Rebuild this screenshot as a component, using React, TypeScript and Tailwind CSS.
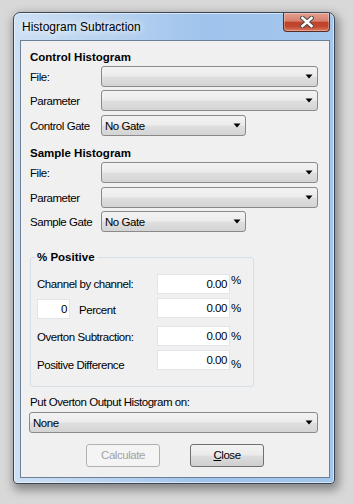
import React from "react";

function Arrow() {
  return (
    <svg width="8" height="5" viewBox="0 0 8 5" className="shrink-0">
      <path d="M0.5 0.5H7.5L4 4.5Z" fill="#000" />
    </svg>
  );
}

function Combo({ w, text }: { w: string; text?: string }) {
  return (
    <div
      className={`${w} h-[21px] flex items-center justify-between rounded-[3px] border border-[#8a8a8a] bg-[linear-gradient(#f3f3f3_0%,#ececec_48%,#dfdfdf_52%,#d4d4d4_100%)] pl-[3px] pr-[4px]`}
    >
      <span className="leading-[14px]">{text}</span>
      <Arrow />
    </div>
  );
}

function TextBox({ w, value }: { w: string; value: string }) {
  return (
    <div
      className={`${w} h-[20px] shrink-0 flex items-center justify-end border border-[#e3e4ea] bg-white pr-[2px] leading-[14px]`}
    >
      {value}
    </div>
  );
}

function CloseGlyph() {
  return (
    <svg width="14" height="12" viewBox="0 0 14 12">
      <path d="M2.5 2L11.5 10M11.5 2L2.5 10" stroke="#4a4a4a" strokeWidth="4.6" strokeLinecap="square" />
      <path d="M2.5 2L11.5 10M11.5 2L2.5 10" stroke="#ffffff" strokeWidth="2.6" strokeLinecap="square" />
    </svg>
  );
}

export default function App() {
  return (
    <div className="w-[353px] h-[504px] overflow-hidden bg-[#d8d8d8] pt-[12px] pl-[13px] font-['Liberation_Sans',Arial,sans-serif] text-[11.5px] tracking-[-0.45px] text-black">
      <div className="relative w-[322px] h-[472px] flex flex-col rounded-t-[7px] rounded-b-[4px] border border-[#3b4756] bg-[linear-gradient(90deg,#cde0f4_0%,#b4d0ef_35%,#9fc3ec_60%,#a3c6ec_100%)] shadow-[inset_0_0_0_1px_rgba(255,255,255,0.55),2px_4px_10px_2px_rgba(0,0,0,0.38)]">
        {/* Title bar */}
        <div className="h-[27px] shrink-0 flex items-center pl-[8px]">
          <span className="text-[12px] tracking-normal leading-[16px] text-black [text-shadow:0_0_6px_#ffffff,0_0_10px_#ffffff]">
            Histogram Subtraction
          </span>
        </div>
        <div className="absolute top-0 right-[4px] w-[47px] h-[19px] flex items-center justify-center rounded-b-[4px] border border-t-0 border-[#5b2b22] bg-[linear-gradient(#e3a08f_0%,#d6806d_45%,#c0412a_52%,#c24730_75%,#d97c61_100%)] shadow-[inset_0_0_0_1px_rgba(255,255,255,0.3)]">
          <CloseGlyph />
        </div>

        {/* Client area */}
        <div className="flex-1 ml-[6px] mr-[4px] mb-[5px] border border-[#6b7f96] bg-[#f0f0f0] pt-[9px] pl-[9px] pr-[11px]">
          <div className="font-bold text-[11.5px] tracking-normal leading-[14px]">Control Histogram</div>
          <div className="mt-[2px] flex items-center">
            <span className="w-[71px] leading-[14px]">File:</span>
            <Combo w="w-[217px]" />
          </div>
          <div className="mt-[3px] flex items-center">
            <span className="w-[71px] leading-[14px]">Parameter</span>
            <Combo w="w-[217px]" />
          </div>
          <div className="mt-[4px] flex items-center">
            <span className="w-[71px] leading-[14px]">Control Gate</span>
            <Combo w="w-[145px]" text="No Gate" />
          </div>

          <div className="mt-[10px] font-bold text-[11.5px] tracking-normal leading-[14px]">Sample Histogram</div>
          <div className="mt-[2px] flex items-center">
            <span className="w-[71px] leading-[14px]">File:</span>
            <Combo w="w-[217px]" />
          </div>
          <div className="mt-[4px] flex items-center">
            <span className="w-[71px] leading-[14px]">Parameter</span>
            <Combo w="w-[217px]" />
          </div>
          <div className="mt-[3px] flex items-center">
            <span className="w-[71px] leading-[14px]">Sample Gate</span>
            <Combo w="w-[145px]" text="No Gate" />
          </div>

          <fieldset className="mt-[18px] w-[224px] rounded-[3px] border border-[#d5dfe5] p-0">
            <legend className="ml-[4px] px-[2px] font-bold text-[11.5px] tracking-normal leading-[14px]">% Positive</legend>
            <div className="pt-[10px] pb-[16px] pl-[6px]">
              <div className="flex items-start h-[20px]">
                <span className="w-[120px] self-center leading-[14px]">Channel by channel:</span>
                <TextBox w="w-[73px]" value="0.00" />
                <span className="ml-[1px] mt-[0px] leading-[12px]">%</span>
              </div>
              <div className="mt-[4px] flex items-start h-[20px]">
                <div className="w-[120px] flex items-center">
                  <div className="mt-[1px]">
                    <TextBox w="w-[33px]" value="0" />
                  </div>
                  <span className="ml-[9px] mt-[3px] leading-[14px]">Percent</span>
                </div>
                <TextBox w="w-[73px]" value="0.00" />
                <span className="ml-[1px] mt-[4px] leading-[12px]">%</span>
              </div>
              <div className="mt-[8px] flex items-start h-[20px]">
                <span className="w-[120px] self-center mt-[2px] leading-[14px]">Overton Subtraction:</span>
                <TextBox w="w-[73px]" value="0.00" />
                <span className="ml-[1px] mt-[4px] leading-[12px]">%</span>
              </div>
              <div className="mt-[4px] flex items-start h-[20px]">
                <span className="w-[120px] mt-[8px] leading-[14px]">Positive Difference</span>
                <TextBox w="w-[73px]" value="0.00" />
                <span className="ml-[1px] mt-[8px] leading-[12px]">%</span>
              </div>
            </div>
          </fieldset>

          <div className="mt-[8px] leading-[14px]">Put Overton Output Histogram on:</div>
          <div className="mt-[3px] -ml-[1px]">
            <Combo w="w-[289px]" text="None" />
          </div>

          <div className="mt-[11px] flex justify-center gap-[30px] pl-[2px]">
            <div className="w-[74px] h-[23px] flex items-center justify-center rounded-[3px] border border-[#adb2b5] bg-[#f4f4f4] text-[#a3a3a3]">
              Calculate
            </div>
            <div className="w-[74px] h-[23px] flex items-center justify-center rounded-[3px] border border-[#707070] bg-[linear-gradient(#f2f2f2_0%,#ebebeb_48%,#dddddd_52%,#cfcfcf_100%)]">
              <span>
                <span className="underline underline-offset-[1px]">C</span>lose
              </span>
            </div>
          </div>
        </div>
      </div>
    </div>
  );
}
